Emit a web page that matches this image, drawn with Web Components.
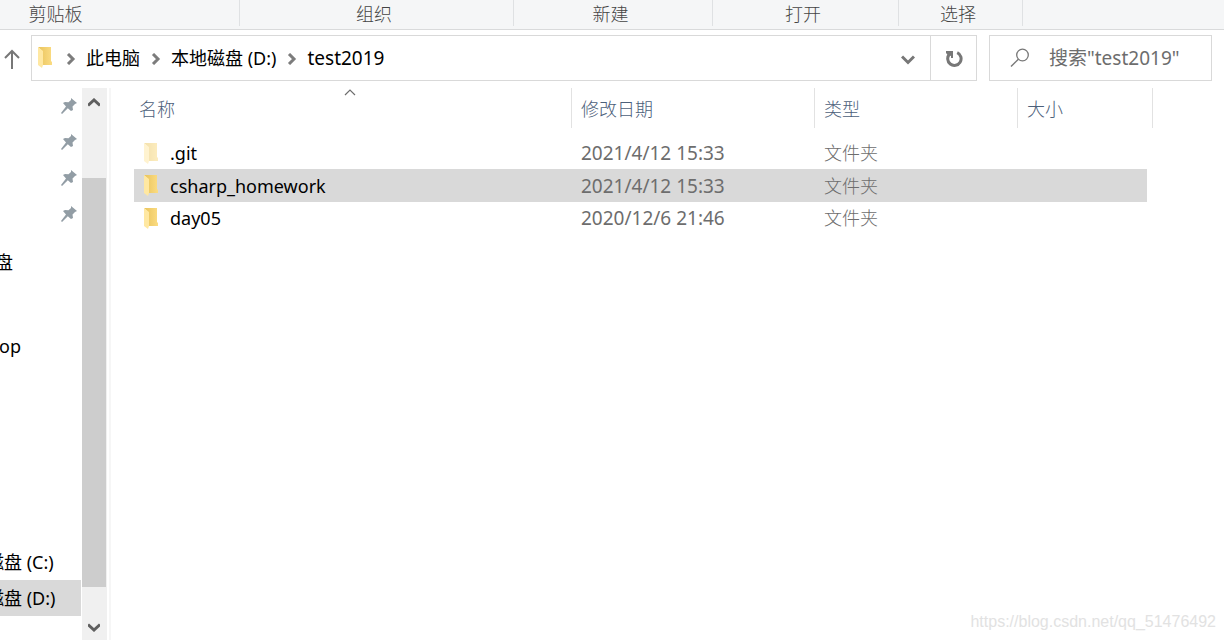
<!DOCTYPE html>
<html lang="zh-CN">
<head>
<meta charset="utf-8">
<title>test2019</title>
<style>
html, body { height: 100%; margin: 0; }
body { background: #fff; color: #000; font: 18px/24px "Noto Sans", "Noto Sans CJK SC", sans-serif; }
</style>
</head>
<body>
<file-explorer></file-explorer>
<script>
const define = (name, html, setup) => customElements.define(name, class extends HTMLElement {
  constructor() {
    super();
    this.attachShadow({ mode: "open" }).innerHTML = html;
  }
  connectedCallback() { if (setup) setup(this, this.shadowRoot); }
});

define("folder-icon", `
<style>
:host { display: block; flex: none; width: 15px; height: 21px; }
:host([faded]) { opacity: .5; }
svg { display: block; }
</style>
<svg width="15" height="21" viewBox="0 0 15 21" aria-hidden="true">
  <defs><linearGradient id="g" x1="0" x2="1"><stop offset="0" stop-color="#e9c35c"/><stop offset="1" stop-color="#fbdc82"/></linearGradient></defs>
  <path d="M0 0H13V14L14 15V18H4V4Z" fill="url(#g)"/>
  <path d="M0 0L5 4V18L4 21L0 18Z" fill="#ffe8a2"/>
</svg>`);

define("pin-icon", `
<style>:host { display: block; width: 16px; height: 16px; } svg { display: block; }</style>
<svg width="16" height="16" viewBox="0 0 16 16" aria-hidden="true">
  <path d="M10 0L16 5L14 6L11.500 8.500L12 12L10 13L6.800 10.200L1 16L0 15L5 8.500L2 5L4 4L7.500 4.300L10 2Z" fill="#929da5"/>
</svg>`);

define("ribbon-group", `
<style>
:host { display: flex; box-sizing: border-box; height: 26px; justify-content: center; padding-right: 5px; border-right: 1px solid #dfe1e3; }
:host([clipped]) { padding-right: 128px; }
</style><slot></slot>`);

define("ribbon-bar", `
<style>
:host { display: grid; grid-template-columns: 240px 274px 199px 186px 124px 1fr; box-sizing: border-box; height: 30px; line-height: 28px; font-weight: 300; background: #f5f6f7; border-bottom: 1px solid #d9dadb; color: #444; }
</style>
<ribbon-group clipped>剪贴板</ribbon-group><ribbon-group>组织</ribbon-group><ribbon-group>新建</ribbon-group><ribbon-group>打开</ribbon-group><ribbon-group>选择</ribbon-group>`);

define("address-bar", `
<style>
:host { display: flex; flex: 1; min-width: 0; box-sizing: border-box; height: 46px; border: 1px solid #d9d9d9; }
nav { display: flex; flex: 1; align-items: center; padding: 0 12px 0 6px; }
a { color: #000; text-decoration: none; white-space: nowrap; }
a.here { font-size: 19px; }
svg { display: block; flex: none; }
folder-icon { margin-bottom: 2px; }
.sep { margin: 2px 10px 0 11px; }
folder-icon + .sep { margin-left: 13px; }
button { border: 0; padding: 0; background: none; display: grid; place-items: center; }
.drop { margin-left: auto; width: 20px; height: 40px; padding-top: 3px; }
.refresh { width: 46px; border-left: 1px solid #d9d9d9; padding-top: 2px; }
</style>
<nav aria-label="地址">
  <folder-icon></folder-icon>
  <svg class="sep" width="10" height="12" viewBox="0 0 10 12"><path d="M2 1L7 6L2 11" fill="none" stroke="#7c7c7c" stroke-width="3"/></svg>
  <a href="#pc">此电脑</a>
  <svg class="sep" width="10" height="12" viewBox="0 0 10 12"><path d="M2 1L7 6L2 11" fill="none" stroke="#7c7c7c" stroke-width="3"/></svg>
  <a href="#d">本地磁盘 (D:)</a>
  <svg class="sep" width="10" height="12" viewBox="0 0 10 12"><path d="M2 1L7 6L2 11" fill="none" stroke="#7c7c7c" stroke-width="3"/></svg>
  <a class="here" href="#test2019">test2019</a>
  <button class="drop" aria-label="历史记录"><svg width="14" height="10" viewBox="0 0 14 10"><path d="M1 1.500L7 7.500L13 1.500" fill="none" stroke="#777" stroke-width="3"/></svg></button>
</nav>
<button class="refresh" aria-label="刷新"><svg width="18" height="18" viewBox="0 0 18 18"><path d="M12.200 2.600A6.700 6.700 0 1 1 4.600 4" fill="none" stroke="#777" stroke-width="3"/><path d="M1 1H8V8H6V5.500L4 6.500L1 3Z" fill="#777"/></svg></button>`);

define("search-box", `
<style>
:host { display: flex; align-items: center; box-sizing: border-box; width: 223px; height: 46px; border: 1px solid #d9d9d9; padding-left: 20px; }
label { display: flex; flex: 1; min-width: 0; align-items: center; gap: 19px; }
svg { flex: none; }
input { flex: 1; min-width: 0; border: 0; padding: 0; outline: 0; background: none; font: inherit; font-size: 19px; height: 40px; }
input::placeholder { color: #6d6d6d; opacity: 1; }
</style>
<label><svg width="20" height="20" viewBox="0 0 20 20" aria-hidden="true"><circle cx="12.500" cy="7" r="5.800" fill="none" stroke="#777" stroke-width="1.300"/><path d="M8.400 11.200L1 18.600" stroke="#777" stroke-width="1.400"/></svg>
<input type="search" aria-label="搜索" placeholder='搜索"test2019"'></label>`);

define("tool-row", `
<style>
:host { display: flex; padding: 5px 12px 7px 4px; }
.up { flex: none; width: 27px; height: 46px; border: 0; padding: 2px 0 0; background: none; display: flex; align-items: center; }
search-box { margin-left: 12px; }
</style>
<button class="up" aria-label="上移"><svg width="16" height="20" viewBox="0 0 16 20"><path d="M8 20V2M1 9L8 2L15 9" fill="none" stroke="#777" stroke-width="2"/></svg></button>
<address-bar></address-bar>
<search-box></search-box>`);

define("tree-item", `
<style>
:host { display: block; }
:host([selected]) { background: #d9d9d9; }
a { display: flex; align-items: center; height: 36px; color: #000; text-decoration: none; white-space: nowrap; margin-left: -14px; }
:host([indent="1"]) a { padding-left: 9px; }
:host([indent="2"]) a { padding-left: 13px; }
:host([pinned]) a { justify-content: flex-end; padding-right: 4px; }
</style><a href="#item"><slot></slot></a>`);

define("side-tree", `
<style>
:host { display: block; width: 81px; flex: none; overflow: hidden; }
.network { margin-top: 12px; }
.desktop { margin-top: 48px; }
.drives { margin-top: 180px; }
</style>
<nav aria-label="导航窗格">
<div><tree-item pinned><pin-icon></pin-icon></tree-item><tree-item pinned><pin-icon></pin-icon></tree-item><tree-item pinned><pin-icon></pin-icon></tree-item><tree-item pinned><pin-icon></pin-icon></tree-item></div>
<div class="network"><tree-item indent="1">盘</tree-item></div>
<div class="desktop"><tree-item indent="2">op</tree-item></div>
<div class="drives"><tree-item>磁盘 (C:)</tree-item><tree-item selected>磁盘 (D:)</tree-item></div>
</nav>`);

define("scroll-rail", `
<style>
:host { display: flex; flex-direction: column; flex: none; width: 25px; margin-left: 1px; background: #f0f0f0; }
button { flex: none; height: 28px; border: 0; padding: 2px 1px 0 0; background: none; display: grid; place-items: center; }
.track { flex: 1; display: grid; grid-template-rows: 62fr 409fr 25fr; }
.thumb { grid-row: 2; background: #cdcdcd; margin-right: 1px; }
</style>
<button aria-label="向上滚动"><svg width="12" height="10" viewBox="0 0 12 10"><path d="M0 7.500L6 2L12 7.500" fill="none" stroke="#5f5f5f" stroke-width="3"/></svg></button>
<div class="track"><div class="thumb"></div></div>
<button aria-label="向下滚动"><svg width="12" height="10" viewBox="0 0 12 10"><path d="M0 2.500L6 8L12 2.500" fill="none" stroke="#5f5f5f" stroke-width="3"/></svg></button>`);

define("file-list", `
<style>
:host { display: block; flex: 1; min-width: 0; margin-left: 2px; border-left: 2px solid #f6f6f6; padding-left: 19px; overflow: hidden; }
table { table-layout: fixed; width: 1023px; border-collapse: separate; border-spacing: 0; font-weight: 300; }
col.name { width: 442px; } col.date { width: 243px; } col.type { width: 203px; } col.size { width: 135px; }
th { position: relative; height: 49px; padding: 0; vertical-align: top; text-align: left; font-weight: 300; color: #4c607a; }
th span { display: block; box-sizing: border-box; height: 40px; line-height: 42px; padding-left: 9px; border-right: 1px solid #e2e2e2; }
th svg { position: absolute; top: 1px; left: 50%; margin-left: -7px; }
td { height: 32px; line-height: 32px; padding: 0 0 0 9px; background-clip: padding-box; color: #6d6d6d; }
td:first-child { border-left: 4px solid transparent; color: #000; font-weight: 400; }
td:nth-child(2) { font-size: 19px; font-weight: 400; }
td:last-child { border-right: 6px solid transparent; }
tr.selected td { background-color: #d9d9d9; height: 33px; }
.file { display: flex; align-items: center; gap: 11px; padding-left: 1px; }
</style>
<table>
<colgroup><col class="name"><col class="date"><col class="type"><col class="size"></colgroup>
<thead><tr><th scope="col" aria-sort="ascending"><span>名称</span><svg width="12" height="7" viewBox="0 0 12 7"><path d="M1 6L6 1L11 6" fill="none" stroke="#6d6d6d" stroke-width="1.200"/></svg></th><th scope="col"><span>修改日期</span></th><th scope="col"><span>类型</span></th><th scope="col"><span>大小</span></th></tr></thead>
<tbody></tbody>
</table>`, (host, root) => {
  const files = [
    { name: ".git", date: "2021/4/12 15:33", faded: true },
    { name: "csharp_homework", date: "2021/4/12 15:33", selected: true },
    { name: "day05", date: "2020/12/6 21:46" }
  ];
  root.querySelector("tbody").innerHTML = files.map(f => `<tr class="${f.selected ? "selected" : ""}"><td><div class="file"><folder-icon ${f.faded ? "faded" : ""}></folder-icon><span>${f.name}</span></div></td><td>${f.date}</td><td>文件夹</td><td></td></tr>`).join("");
});

define("file-explorer", `
<style>
:host { display: flex; flex-direction: column; position: relative; min-height: 100%; height: 100%; overflow: hidden; }
ribbon-bar, tool-row { flex: none; }
main { display: flex; flex: 1; min-height: 0; }
.credit { position: absolute; right: 8px; bottom: 6px; color: #e2e2e2; font: 16px/24px "Liberation Sans", sans-serif; }
</style>
<ribbon-bar></ribbon-bar>
<tool-row></tool-row>
<main><side-tree></side-tree><scroll-rail></scroll-rail><file-list></file-list></main>
<span class="credit">https://blog.csdn.net/qq_51476492</span>`);
</script>
</body>
</html>
